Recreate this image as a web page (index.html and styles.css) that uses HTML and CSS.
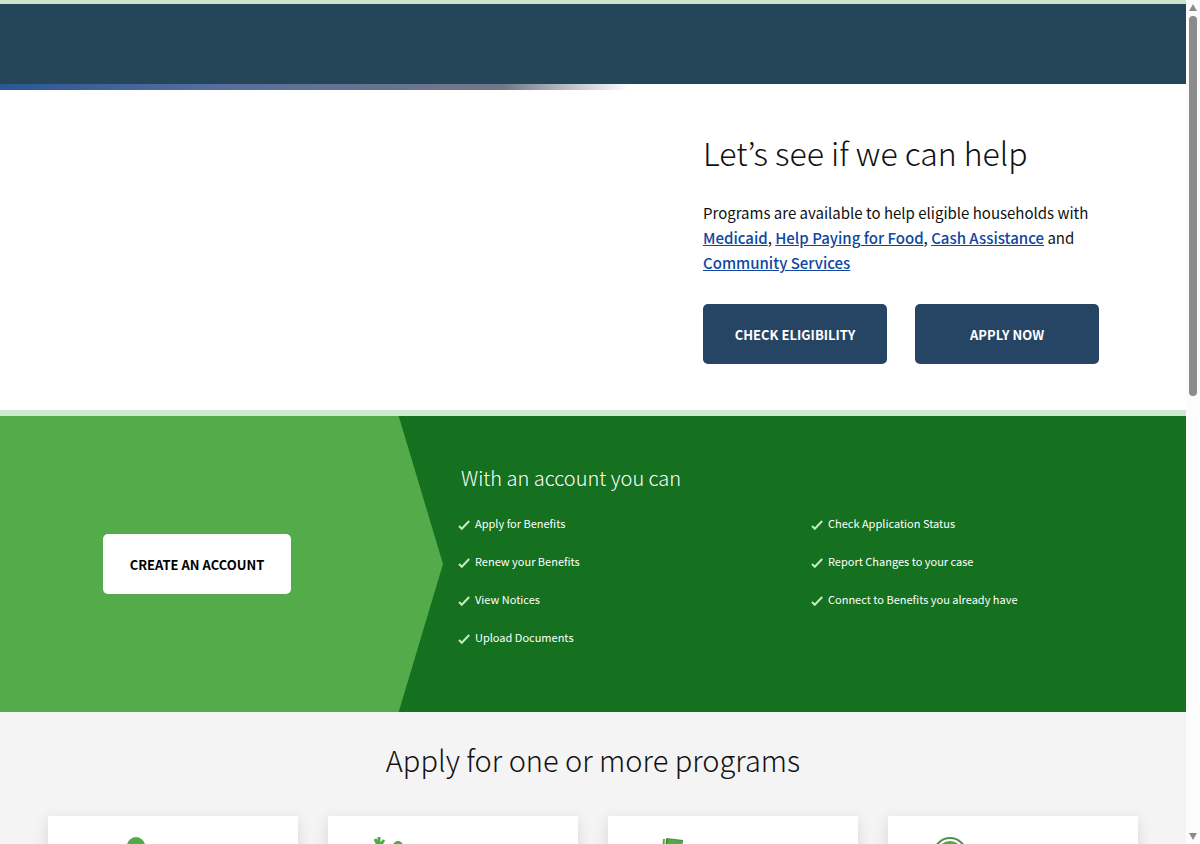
FILE: index.html
```
<!DOCTYPE html>
<html lang="en">
<head>
    <meta charset="UTF-8">
    <meta name="viewport" content="width=device-width, initial-scale=1.0">
    <title>Benefits</title>
    <link rel="stylesheet" href="styles.css">
</head>
<body>
    <div class="page">
        <header class="header"></header>

        <section class="hero">
            <div class="loading-bar"></div>
            <div class="hero-content">
                <h1>Let’s see if we can help</h1>
                <p>Programs are available to help eligible households with <a href="#">Medicaid</a>, <a href="#">Help Paying for Food</a>, <a href="#">Cash Assistance</a> and <a href="#">Community Services</a></p>
                <div class="hero-buttons">
                    <button class="btn">CHECK ELIGIBILITY</button>
                    <button class="btn">APPLY NOW</button>
                </div>
            </div>
        </section>

        <section class="account">
            <div class="account-left">
                <button class="btn btn-white">CREATE AN ACCOUNT</button>
            </div>
            <div class="account-right">
                <h2>With an account you can</h2>
                <div class="lists">
                    <ul>
                        <li><svg class="check" viewBox="0 0 12 10"><path d="M1 6 L3.8 8.8 L11.2 1"/></svg>Apply for Benefits</li>
                        <li><svg class="check" viewBox="0 0 12 10"><path d="M1 6 L3.8 8.8 L11.2 1"/></svg>Renew your Benefits</li>
                        <li><svg class="check" viewBox="0 0 12 10"><path d="M1 6 L3.8 8.8 L11.2 1"/></svg>View Notices</li>
                        <li><svg class="check" viewBox="0 0 12 10"><path d="M1 6 L3.8 8.8 L11.2 1"/></svg>Upload Documents</li>
                    </ul>
                    <ul>
                        <li><svg class="check" viewBox="0 0 12 10"><path d="M1 6 L3.8 8.8 L11.2 1"/></svg>Check Application Status</li>
                        <li><svg class="check" viewBox="0 0 12 10"><path d="M1 6 L3.8 8.8 L11.2 1"/></svg>Report Changes to your case</li>
                        <li><svg class="check" viewBox="0 0 12 10"><path d="M1 6 L3.8 8.8 L11.2 1"/></svg>Connect to Benefits you already have</li>
                    </ul>
                </div>
            </div>
        </section>

        <section class="programs">
            <h2>Apply for one or more programs</h2>
            <div class="cards">
                <div class="card">
                    <!-- person -->
                    <svg class="icon" viewBox="0 0 80 60">
                        <circle cx="43" cy="9" r="9"/>
                        <path d="M26 48 V32 Q26 22 36 22 H50 Q60 22 60 32 V48 Z"/>
                    </svg>
                </div>
                <div class="card">
                    <!-- carrot and apple -->
                    <svg class="icon" viewBox="0 0 80 60">
                        <path class="line" d="M6 10 L2 2 M6 10 V0 M6 10 L11 3"/>
                        <path d="M0 12 Q7 6 14 12 L8 46 Z"/>
                        <circle cx="25" cy="9" r="5"/>
                        <circle cx="28" cy="28" r="12"/>
                    </svg>
                </div>
                <div class="card">
                    <!-- bank notes -->
                    <svg class="icon" viewBox="0 0 80 60">
                        <path class="edge" d="M13 2 L29 4 L28 8 L11 36 L10 36 Z"/>
                        <path class="edge" d="M13 1 L30 3 L30 5 L14 3 Z"/>
                        <path d="M15 2 L30 4 L26 40 L11 38 Z"/>
                        <path d="M12 2 L10 2 L7 36 L9 36 Z"/>
                    </svg>
                </div>
                <div class="card">
                    <!-- coin -->
                    <svg class="icon" viewBox="0 0 80 60">
                        <circle class="ring" cx="17" cy="17" r="16"/>
                        <circle cx="17" cy="17" r="13"/>
                    </svg>
                </div>
            </div>
        </section>
    </div>

    <div class="scrollbar">
        <svg viewBox="0 0 14 14"><path d="M3 11 L7 4 L11 11 Z"/></svg>
        <div class="thumb"></div>
        <svg viewBox="0 0 14 14"><path d="M3 3 L7 10 L11 3 Z"/></svg>
    </div>
</body>
</html>
```
FILE: styles.css
```
* {
    box-sizing: border-box;
}
body {
    margin: 0;
    height: 100vh;
    display: flex;
    overflow: hidden;
    font-family: "Source Sans Pro", "Noto Sans CJK KR", sans-serif;
    color: #111;
    background: white;
}
h1, h2, p, ul {
    margin: 0;
    padding: 0;
}
.page {
    flex: 1;
    overflow: hidden;
}
.header {
    height: 84px;
    background: #254559;
    border-top: 4px solid #cde3ca;
}
.hero {
    display: flex;
    justify-content: flex-end;
    position: relative;
    padding: 38px 87px 46px 0;
    border-bottom: 6px solid #cde9cf;
}
.loading-bar {
    position: absolute;
    top: 0;
    left: 0;
    width: 53%;
    height: 6px;
    background: linear-gradient(to right, #2a5795, #576f9c 35%, #727888 80%, white);
}
.hero-content {
    width: 396px;
}
h1, h2 {
    font-weight: 200;
}
h1 {
    font-size: 32px;
    line-height: 60px;
}
.hero p {
    margin-top: 18px;
    font-size: 15px;
    line-height: 25px;
}
.hero a {
    color: #0f47a1;
    font-weight: 500;
}
.hero-buttons {
    display: grid;
    grid-template-columns: 1fr 1fr;
    gap: 28px;
    margin-top: 29px;
}
.btn {
    height: 60px;
    border: none;
    border-radius: 5px;
    background: #264463;
    color: white;
    font-family: inherit;
    font-size: 13px;
    font-weight: 700;
    cursor: pointer;
}
.btn-white {
    width: 188px;
    background: white;
    color: #000;
}
.account {
    display: flex;
    height: 296px;
    background: #15711f;
    color: white;
}
.account-left {
    width: 443px;
    padding-right: 49px;
    display: flex;
    align-items: center;
    justify-content: center;
    background: #54ab49;
    clip-path: polygon(0 0, 90% 0, 100% 50%, 90% 100%, 0 100%);
}
.account-right {
    flex: 1;
    padding: 46px 22px 0 15px;
}
.account-right h2 {
    padding-left: 3px;
    font-size: 20px;
    line-height: 32px;
}
.lists {
    display: grid;
    grid-template-columns: 1fr 1fr;
    margin-top: 19px;
}
.lists ul {
    display: grid;
    align-content: start;
    gap: 18px;
    list-style: none;
}
.lists li {
    display: flex;
    align-items: center;
    gap: 5px;
    font-size: 11px;
    line-height: 20px;
}
.check {
    width: 12px;
    height: 10px;
    margin-top: 4px;
    fill: none;
    stroke: #c5ecc0;
    stroke-width: 2;
}
.programs {
    padding: 23px 48px;
    background: #f4f4f4;
}
.programs h2 {
    text-align: center;
    font-size: 29px;
    line-height: 48px;
}
.cards {
    display: grid;
    grid-template-columns: repeat(4, 1fr);
    gap: 30px;
    margin-top: 33px;
}
.card {
    height: 250px;
    padding: 21px 45px;
    background: white;
    box-shadow: 0 4px 14px rgba(0, 0, 0, 0.12);
}
.icon {
    width: 80px;
    height: 60px;
    fill: #54a849;
}
.icon .line {
    fill: none;
    stroke: #54a849;
    stroke-width: 3;
}
.icon .edge {
    fill: #3c8a3d;
}
.icon .ring {
    fill: none;
    stroke: #4c9150;
    stroke-width: 2;
}
.scrollbar {
    width: 14px;
    display: flex;
    flex-direction: column;
    justify-content: space-between;
    background: #fcfcfc;
}
.scrollbar svg {
    width: 14px;
    height: 14px;
    fill: #8b8b8b;
}
.thumb {
    width: 8px;
    height: 45%;
    margin: 2px 3px auto;
    border-radius: 4px;
    background: #8b8b8b;
}
```
